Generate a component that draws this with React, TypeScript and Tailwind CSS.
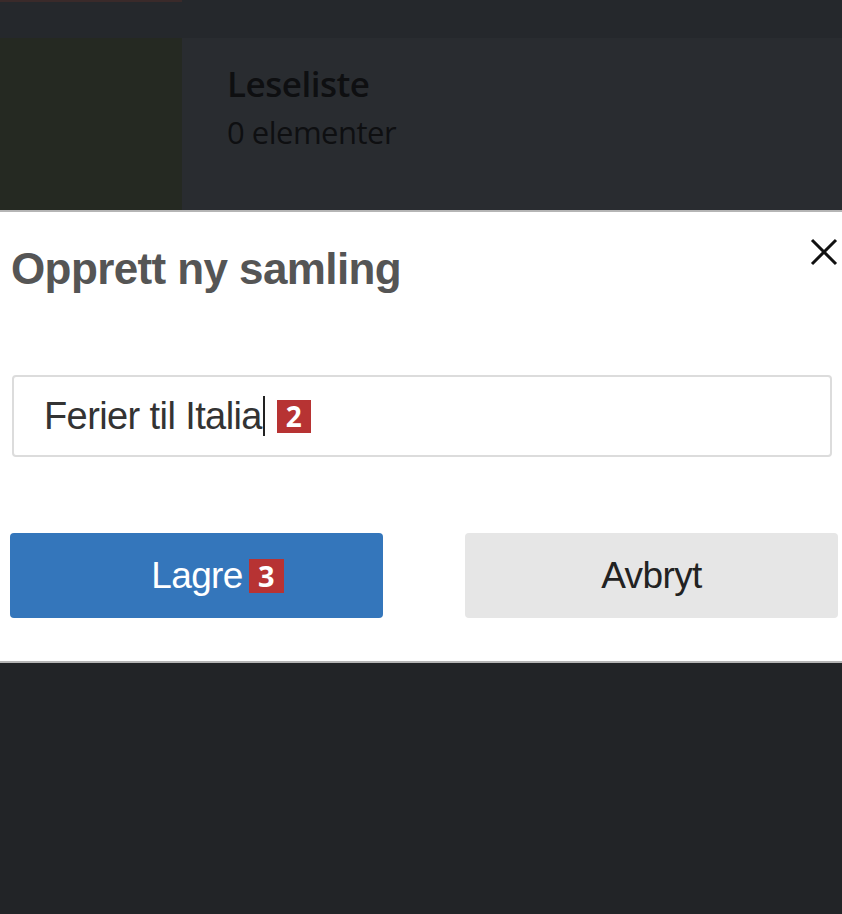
export default function App() {
  return (
    <div className="w-[842px] h-[914px] bg-[#222427] flex flex-col overflow-hidden font-['Liberation_Sans',Arial,sans-serif]">
      {/* dimmed page behind the dialog */}
      <div className="h-[38px] bg-[#25282c] flex">
        <div className="w-[182px] h-[2px] bg-[#3a2a2a]" />
      </div>
      <div className="h-[172px] flex bg-[#292c30]">
        <div className="w-[182px] bg-[#252922]" />
        <div className="pl-[45px] pt-[22px] flex flex-col font-['Open_Sans',sans-serif] text-[#0e0f11]">
          <span className="text-[35px] font-semibold leading-[48px] tracking-[-0.5px]">Leseliste</span>
          <span className="text-[31px] leading-[48px] tracking-[-0.5px]">0 elementer</span>
        </div>
      </div>

      {/* dialog */}
      <div className="h-[453px] bg-white border-t-2 border-b-2 border-[#b5b5b5] flex flex-col px-[10px]">
        <div className="flex justify-between items-start pt-[25px] pl-[1px]">
          <h2 className="text-[44px] font-bold text-[#555555] leading-[64px] tracking-[-0.6px]">Opprett ny samling</h2>
          <svg width="28" height="28" viewBox="0 0 28 28" className="mt-[1px] mr-[-6px]">
            <path d="M2 2 L26 26 M26 2 L2 26" stroke="#111" strokeWidth="3" />
          </svg>
        </div>
        <div className="mt-[74px] ml-[2px] h-[82px] border-2 border-[#dcdcdc] rounded-[4px] flex items-center pl-[30px]">
          <span className="text-[38px] text-[#333] tracking-[-0.6px]">Ferier til Italia</span>
          <span className="w-[2px] h-[40px] bg-[#222] ml-[1px]" />
          <span className="ml-[12px] w-[34px] h-[33px] bg-[#b73333] text-white text-[28px] font-bold flex items-center justify-center font-['Open_Sans',sans-serif]">2</span>
        </div>
        <div className="mt-[76px] flex justify-between">
          <button className="w-[373px] h-[85px] bg-[#3476bb] rounded-[4px] flex items-center justify-center gap-[6px] pl-[42px]">
            <span className="text-[37px] text-white tracking-[-0.6px]">Lagre</span>
            <span className="w-[35px] h-[34px] bg-[#b73333] text-white text-[29px] font-bold flex items-center justify-center font-['Open_Sans',sans-serif]">3</span>
          </button>
          <button className="w-[373px] h-[85px] bg-[#e6e6e6] rounded-[4px] mr-[-6px] flex items-center justify-center">
            <span className="text-[37px] text-[#222] tracking-[-0.6px]">Avbryt</span>
          </button>
        </div>
      </div>
    </div>
  );
}
